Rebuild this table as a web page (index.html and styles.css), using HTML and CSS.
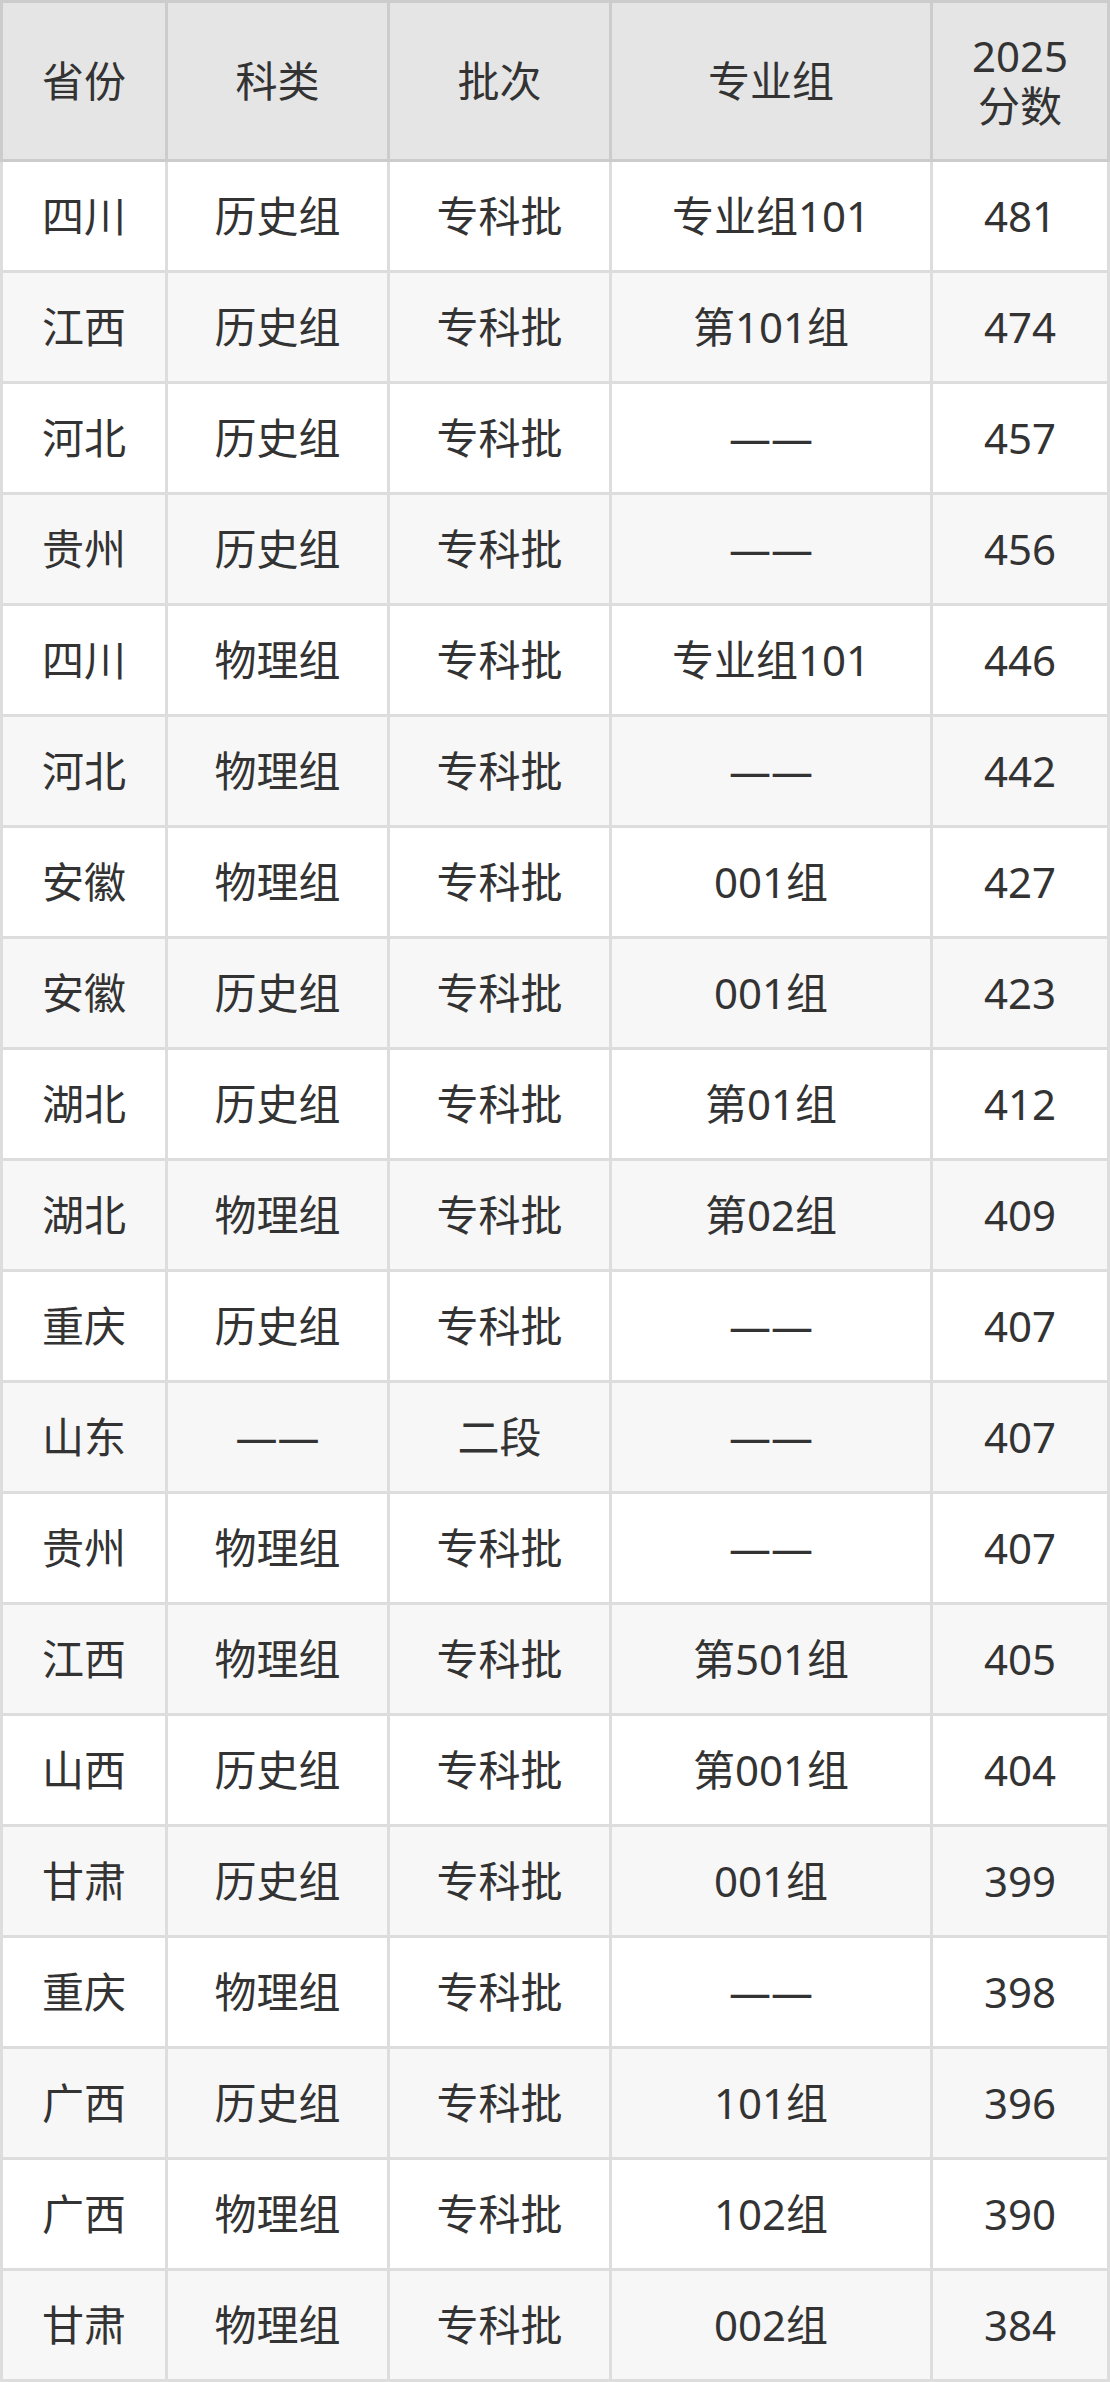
FILE: index.html
```html
<!DOCTYPE html>
<html>
<head>
    <meta charset="utf-8">
    <title>2025 分数</title>
    <link rel="stylesheet" href="styles.css">
</head>
<body>
    <table class="score-table">
        <thead>
            <tr>
                <th class="col-prov">省份</th>
                <th class="col-type">科类</th>
                <th class="col-batch">批次</th>
                <th class="col-group">专业组</th>
                <th class="col-score">2025<br>分数</th>
            </tr>
        </thead>
        <tbody>
            <tr><td>四川</td><td>历史组</td><td>专科批</td><td>专业组101</td><td>481</td></tr>
            <tr><td>江西</td><td>历史组</td><td>专科批</td><td>第101组</td><td>474</td></tr>
            <tr><td>河北</td><td>历史组</td><td>专科批</td><td>——</td><td>457</td></tr>
            <tr><td>贵州</td><td>历史组</td><td>专科批</td><td>——</td><td>456</td></tr>
            <tr><td>四川</td><td>物理组</td><td>专科批</td><td>专业组101</td><td>446</td></tr>
            <tr><td>河北</td><td>物理组</td><td>专科批</td><td>——</td><td>442</td></tr>
            <tr><td>安徽</td><td>物理组</td><td>专科批</td><td>001组</td><td>427</td></tr>
            <tr><td>安徽</td><td>历史组</td><td>专科批</td><td>001组</td><td>423</td></tr>
            <tr><td>湖北</td><td>历史组</td><td>专科批</td><td>第01组</td><td>412</td></tr>
            <tr><td>湖北</td><td>物理组</td><td>专科批</td><td>第02组</td><td>409</td></tr>
            <tr><td>重庆</td><td>历史组</td><td>专科批</td><td>——</td><td>407</td></tr>
            <tr><td>山东</td><td>——</td><td>二段</td><td>——</td><td>407</td></tr>
            <tr><td>贵州</td><td>物理组</td><td>专科批</td><td>——</td><td>407</td></tr>
            <tr><td>江西</td><td>物理组</td><td>专科批</td><td>第501组</td><td>405</td></tr>
            <tr><td>山西</td><td>历史组</td><td>专科批</td><td>第001组</td><td>404</td></tr>
            <tr><td>甘肃</td><td>历史组</td><td>专科批</td><td>001组</td><td>399</td></tr>
            <tr><td>重庆</td><td>物理组</td><td>专科批</td><td>——</td><td>398</td></tr>
            <tr><td>广西</td><td>历史组</td><td>专科批</td><td>101组</td><td>396</td></tr>
            <tr><td>广西</td><td>物理组</td><td>专科批</td><td>102组</td><td>390</td></tr>
            <tr><td>甘肃</td><td>物理组</td><td>专科批</td><td>002组</td><td>384</td></tr>
        </tbody>
    </table>
</body>
</html>
```

FILE: styles.css
```css
body {
    margin: 0;
    background-color: #ffffff;
    font-family: "Noto Sans", "Noto Sans CJK SC", sans-serif;
    color: #333333;
}
.score-table {
    border-collapse: separate;
    border-spacing: 0;
    table-layout: fixed;
    width: 1110px;
}
.score-table th,
.score-table td {
    padding: 0;
    text-align: center;
    vertical-align: middle;
    font-size: 42px;
    font-weight: normal;
    line-height: 50px;
}
.score-table th {
    height: 156px;
    background-color: #e5e5e5;
    border-top: 3px solid #cccccc;
    border-right: 3px solid #cccccc;
    border-bottom: 3px solid #cccccc;
}
.score-table th:first-child {
    border-left: 3px solid #cccccc;
}
.score-table td {
    height: 108px;
    border-right: 3px solid #dddddd;
    border-bottom: 3px solid #dddddd;
}
.score-table td:first-child {
    border-left: 3px solid #dddddd;
}
.score-table tbody tr:nth-child(even) td {
    background-color: #f7f7f7;
}
.col-prov { width: 162px; }
.col-type { width: 219px; }
.col-batch { width: 219px; }
.col-group { width: 318px; }
.col-score { width: 174px; }
```
